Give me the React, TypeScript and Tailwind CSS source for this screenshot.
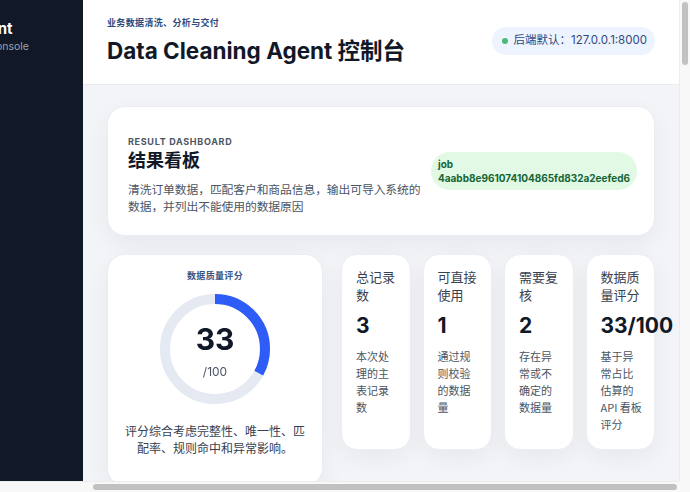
import { useLayoutEffect, useRef } from "react";

const stats = [
  { title: "总记录数", value: "3", desc: "本次处理的主表记录数" },
  { title: "可直接使用", value: "1", desc: "通过规则校验的数据量" },
  { title: "需要复核", value: "2", desc: "存在异常或不确定的数据量" },
  { title: "数据质量评分", value: "33/100", desc: "基于异常占比估算的 API 看板评分" },
];

function ScoreRing({ score }: { score: number }) {
  const r = 50;
  const c = 2 * Math.PI * r;
  return (
    <div className="relative mx-auto mt-[11px] h-[110px] w-[110px]">
      <svg viewBox="0 0 110 110" className="h-[110px] w-[110px] -rotate-90">
        <circle cx="55" cy="55" r={r} fill="none" stroke="#e5e9f2" strokeWidth="10" />
        <circle
          cx="55"
          cy="55"
          r={r}
          fill="none"
          stroke="#2d5cf6"
          strokeWidth="10"
          strokeDasharray={`${(c * score) / 100} ${c}`}
        />
      </svg>
      <div className="absolute inset-0 flex flex-col items-center justify-center">
        <span className="text-[30px] font-bold leading-[40px] text-[#111827]">{score}</span>
        <span className="mt-[5px] text-[12px] leading-4 text-[#4b5563]">/100</span>
      </div>
    </div>
  );
}

export default function App() {
  const scroller = useRef<HTMLDivElement>(null);

  // the dashboard opens scrolled to the far right
  useLayoutEffect(() => {
    const el = scroller.current;
    if (el) el.scrollLeft = el.scrollWidth;
  }, []);

  return (
    <div className="grid h-screen grid-cols-[1fr_11px] grid-rows-[1fr_11px] bg-[#f7f7f7]">
      <div ref={scroller} className="min-h-0 min-w-0 overflow-auto [scrollbar-width:none]">
        <div className="flex min-h-[3670px] font-['Inter','Noto_Sans_CJK_SC',sans-serif]">
          <aside className="w-44 shrink-0 bg-[#111827] px-6 pt-[19px]">
            <div className="whitespace-nowrap text-[15px] font-bold leading-5 text-white">Data Agent</div>
            <div className="whitespace-nowrap text-[10.5px] leading-4 text-[#9ca3af]">Clean Data Console</div>
          </aside>

          <main className="flex min-w-[596px] flex-1 flex-col bg-[#f3f4f8]">
            <header className="flex items-center justify-between border-b border-[#e8ebf0] bg-white px-6 pb-[17px] pt-[15px]">
              <div>
                <p className="text-[9px] font-semibold leading-4 tracking-[0.35px] text-[#2f4a7d]">业务数据清洗、分析与交付</p>
                <h1 className="mt-1 text-[22.5px] font-bold leading-8 text-[#111827]">Data Cleaning Agent 控制台</h1>
              </div>
              <div className="flex h-7 items-center gap-[6px] rounded-full bg-[#eef4ff] pl-[10px] pr-2 text-[11.5px] text-[#2e4a7d]">
                <span className="h-[6px] w-[6px] rounded-full bg-[#48bb78]" />
                后端默认：127.0.0.1:8000
              </div>
            </header>

            <div className="flex flex-col gap-[18px] px-6 pt-[21px]">
              <section className="flex items-start gap-[3px] rounded-[18px] border border-[#e9ecf1] bg-white pb-[19px] pl-[20px] pr-[17px] pt-[29px] shadow-[0_8px_24px_rgba(15,23,42,0.05)]">
                <div className="flex-1">
                  <p className="text-[9px] font-bold leading-3 tracking-[0.7px] text-[#4b5563]">RESULT DASHBOARD</p>
                  <h2 className="text-[18px] font-bold leading-[26px] text-[#111827]">结果看板</h2>
                  <p className="mt-[8px] text-[11.8px] leading-[17px] tracking-[-0.1px] text-[#4b5563]">
                    清洗订单数据，匹配客户和商品信息，输出可导入系统的数据，并列出不能使用的数据原因
                  </p>
                </div>
                <div className="mt-[16px] shrink-0 rounded-full bg-[#e1f9e5] px-[7px] py-[5px] text-[10px] font-bold leading-[14px] text-[#166534]">
                  <div>job</div>
                  <div>4aabb8e961074104865fd832a2eefed6</div>
                </div>
              </section>

              <div className="grid grid-cols-[216px_1fr] items-start gap-[18px]">
                <section className="rounded-[18px] border border-[#e9ecf1] bg-white px-4 pb-7 pt-[14px] text-center shadow-[0_8px_24px_rgba(15,23,42,0.05)]">
                  <p className="text-[9px] font-semibold leading-[14px] tracking-[0.35px] text-[#3b5583]">数据质量评分</p>
                  <ScoreRing score={33} />
                  <p className="mt-[19px] text-[12px] leading-[17px] text-[#374151]">
                    评分综合考虑完整性、唯一性、匹配率、规则命中和异常影响。
                  </p>
                </section>

                <div className="grid grid-cols-4 items-stretch gap-3">
                  {stats.map((s) => (
                    <div
                      key={s.title}
                      className="rounded-2xl border border-[#eceef3] bg-white pb-4 pl-[14px] pr-[10px] pt-[13px] shadow-[0_8px_24px_rgba(15,23,42,0.05)]"
                    >
                      <p className="text-[13px] leading-[18px] text-[#374151]">{s.title}</p>
                      <p className="mt-[8px] text-[21px] font-bold leading-7 text-[#111827]">{s.value}</p>
                      <p className="mt-[8px] font-['Noto_Sans_CJK_SC',sans-serif] text-[11px] leading-[17px] text-[#4b5563]">
                        {s.desc}
                      </p>
                    </div>
                  ))}
                </div>
              </div>
            </div>
          </main>
        </div>
      </div>

      {/* scrollbars as the reference browser draws them */}
      <div className="border-l border-[#ececec] bg-[#f8f8f8] px-[2px] pt-[2px]">
        <div className="h-[63px] rounded-full bg-[#c1c1c1]" />
      </div>
      <div className="border-t border-[#ececec] bg-[#f8f8f8] py-[2px] pl-[93px] pr-[2px]">
        <div className="h-[6px] rounded-full bg-[#c1c1c1]" />
      </div>
      <div className="bg-[#f8f8f8]" />
    </div>
  );
}
